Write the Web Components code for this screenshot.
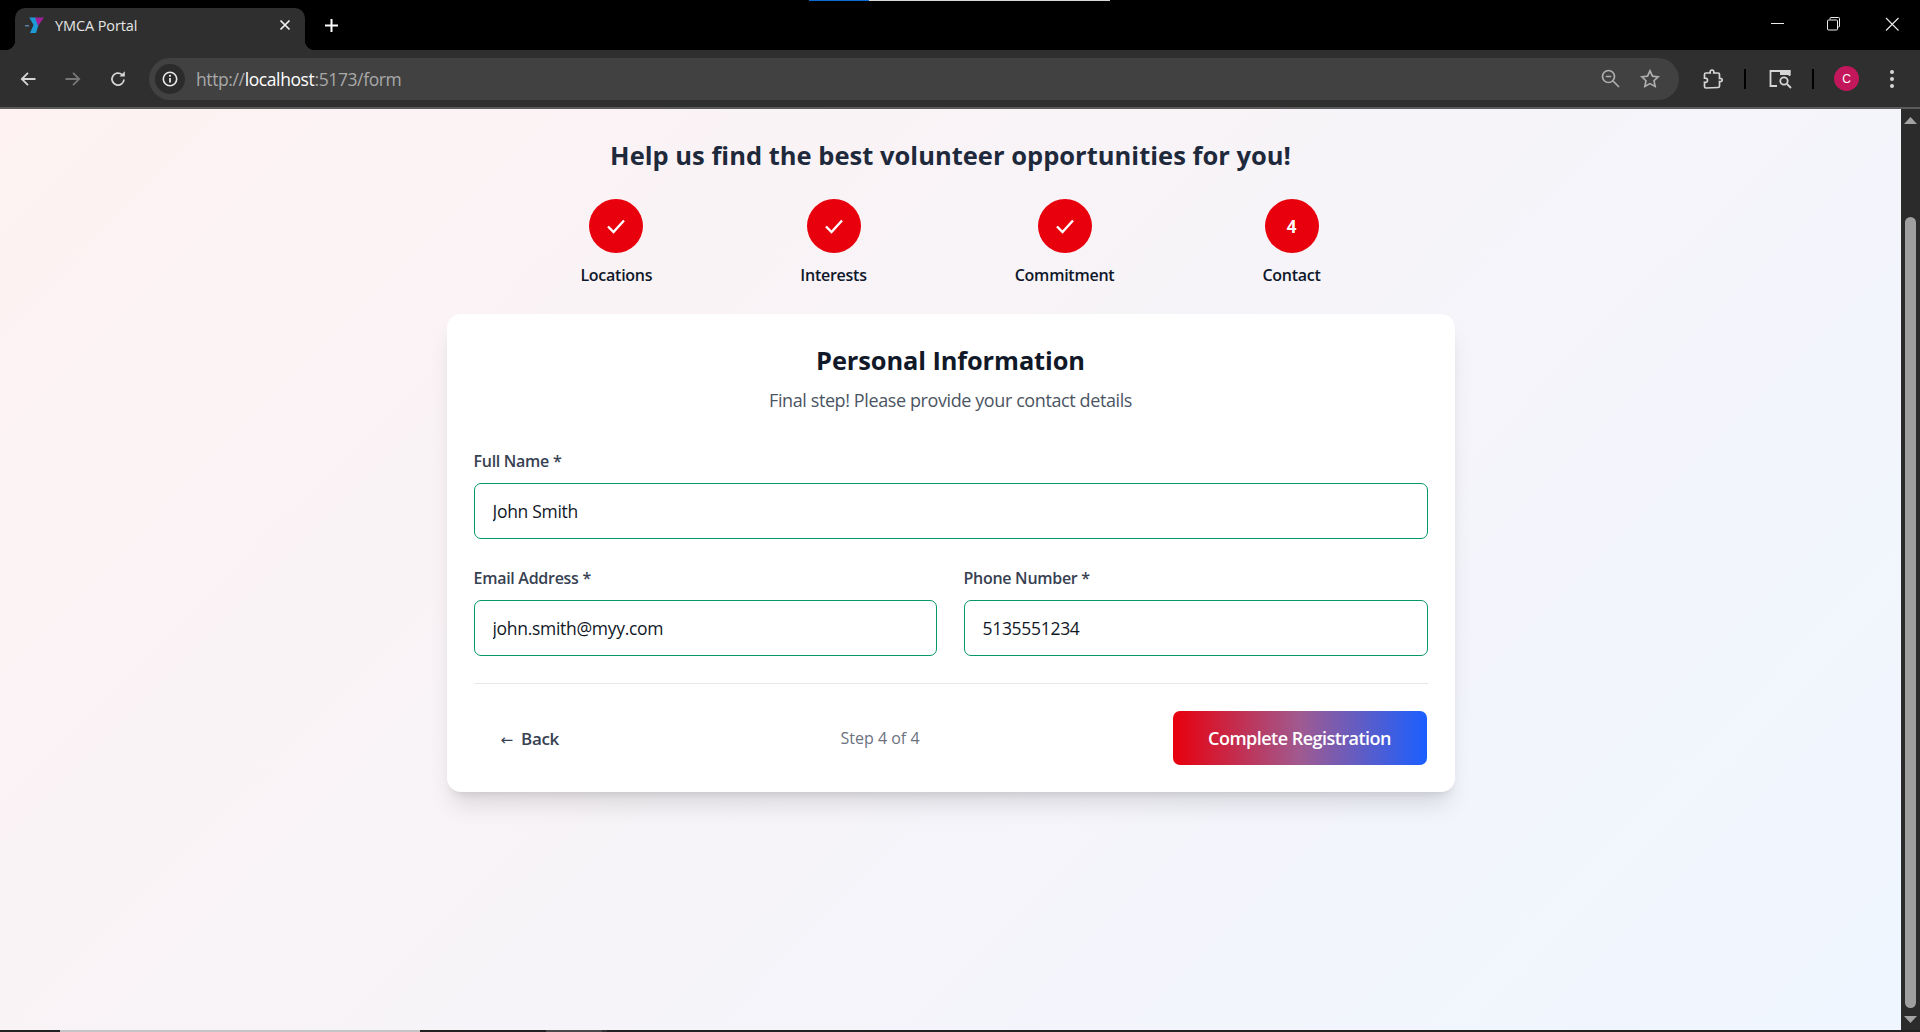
<!DOCTYPE html>
<html lang="en">
<head>
<meta charset="utf-8">
<title>YMCA Portal</title>
<style>
  html, body { margin: 0; height: 100%; overflow: hidden; background: #000; }
  body { font-family: "Open Sans", "Noto Sans", sans-serif; }
</style>
</head>
<body>
<browser-window>
  <form-page>
    <step-bar></step-bar>
    <info-card></info-card>
  </form-page>
</browser-window>

<script>
// Browser frame: tab strip, toolbar, scrollbar, and the page in a slot
class BrowserWindow extends HTMLElement {
  constructor() {
    super();
    this.attachShadow({ mode: 'open' });
    this.shadowRoot.innerHTML = `
      <style>
        :host { display: flex; flex-direction: column; height: 1032px; width: 1920px; position: relative; color: #fff; }
        .loading { position: absolute; left: 809px; top: 0; width: 301px; height: 1px; background: #d8d8d8; }
        .loading i { display: block; width: 60px; height: 1px; background: #0a6cd0; }
        .strip { height: 50px; flex: none; background: #000; display: flex; align-items: flex-end; padding-left: 15px; }
        .tab { width: 290px; height: 42px; background: #2f2f2f; border-radius: 10px 10px 0 0; position: relative; display: flex; align-items: center; padding: 0 0 8px 10px; box-sizing: border-box; font: 14.5px "Open Sans", sans-serif; letter-spacing: -.1px; color: #e6e6e6; }
        .tab::before, .tab::after { content: ""; position: absolute; bottom: 0; width: 10px; height: 10px; }
        .tab::before { left: -10px; background: radial-gradient(circle at 0 0, #000 10px, #2f2f2f 10.5px); }
        .tab::after { right: -10px; background: radial-gradient(circle at 100% 0, #000 10px, #2f2f2f 10.5px); }
        .tab span { margin-left: 8px; flex: 1; }
        .tab svg.x { margin-right: 14px; }
        .plus { margin: 0 0 18px 20px; align-self: flex-end; }
        .winbtns { margin-left: auto; display: flex; align-self: flex-start; margin-top: 16px; padding-right: 4px; }
        .winbtns svg { display: block; }
        .toolbar { height: 57px; flex: none; background: #2f2f2f; display: flex; align-items: center; box-sizing: border-box; padding-left: 20px; }
        .rule { height: 2px; flex: none; background: #5c5c5c; }
        .tb { display: block; flex: none; }
        .sep { width: 2px; height: 20px; margin-left: 20px; background: #000; flex: none; }
        .avatar { margin-left: 20px; width: 25px; height: 25px; border-radius: 50%; background: #c2185b; display: flex; align-items: center; justify-content: center; font: 12px "Liberation Sans", sans-serif; color: #fff; flex: none; }
        .omni { width: 1530px; height: 42px; margin-left: 23px; background: #414141; border-radius: 21px; display: flex; align-items: center; flex: none; box-sizing: border-box; }
        .info { width: 30px; height: 30px; margin-left: 6px; border-radius: 50%; background: #2b2b2b; display: flex; align-items: center; justify-content: center; }
        .url { margin-left: 11px; font: 17.5px "Open Sans", sans-serif; letter-spacing: -.39px; color: #a9a9a9; flex: 1; }
        .url b { font-weight: 400; color: #fff; }
        .body { flex: 1; display: flex; min-height: 0; }
        .content { flex: 1; min-width: 0; }
        .scroll { width: 19px; flex: none; background: #2b2b2b; position: relative; }
        .scroll .up { position: absolute; left: 3px; top: 8px; }
        .scroll .down { position: absolute; left: 3px; top: 907px; }
        .thumb { position: absolute; left: 4px; top: 108px; width: 11px; height: 791px; background: #9f9f9f; border-radius: 6px; }
        .taskbar { height: 2px; flex: none; display: flex; background: #222; }
        .taskbar i { display: block; height: 2px; flex: none; }
      </style>
      <div class="loading"><i></i></div>
      <div class="strip">
        <div class="tab">
          <svg class="fav" width="22" height="20" viewBox="0 0 22 20">
            <path d="M0 10h4v1.5H0z" fill="#5b7fa5"/>
            <path d="M4.300 2.500H11L13.500 10 11 18H5L8.500 10z" fill="#1d9ad6"/>
            <path d="M10 2.500h9L13 11z" fill="#a0209a"/>
          </svg>
          <span>YMCA Portal</span>
          <svg class="x" width="12" height="12" viewBox="0 0 12 12"><path d="M1.500 1.500l9 9M10.500 1.500l-9 9" stroke="#f2f2f2" stroke-width="1.700"/></svg>
        </div>
        <svg class="plus" width="13" height="13" viewBox="0 0 13 13"><path d="M6.500 0v13M0 6.500h13" stroke="#fff" stroke-width="2"/></svg>
        <div class="winbtns">
          <svg width="56" height="16" viewBox="0 0 56 16"><path d="M0 7.500h13" stroke="#ececec" stroke-width="1"/></svg>
          <svg width="58" height="16" viewBox="0 0 58 16" fill="none" stroke="#ececec"><rect x=".5" y="4" width="10" height="10" rx="1"/><path d="M3 3.500V2.500a1 1 0 0 1 1-1h7.500a1 1 0 0 1 1 1V10a1 1 0 0 1-1 1h-1"/></svg>
          <svg width="31" height="16" viewBox="0 0 31 16"><path d="M1 2l12.500 12.500M13.500 2L1 14.500" stroke="#ececec" stroke-width="1.100" fill="none"/></svg>
        </div>
      </div>
      <div class="toolbar">
        <svg class="tb" width="16" height="16" viewBox="0 0 16 16"><path d="M15.500 8H2M8 1.800L1.800 8 8 14.200" fill="none" stroke="#d6d6d6" stroke-width="1.800"/></svg>
        <svg class="tb" style="margin-left:29px" width="16" height="16" viewBox="0 0 16 16"><path d="M.5 8H14M8 1.800L14.200 8 8 14.200" fill="none" stroke="#777" stroke-width="1.800"/></svg>
        <svg class="tb" style="margin-left:29px" width="16" height="16" viewBox="0 0 16 16"><path d="M14 8.500A6 6 0 1 1 12 3.600" fill="none" stroke="#d6d6d6" stroke-width="1.800"/><path d="M9.500 5.500h5.300V.3z" fill="#d6d6d6"/></svg>
        <div class="omni">
          <div class="info">
            <svg width="16" height="16" viewBox="0 0 16 16"><circle cx="8" cy="8" r="6.700" fill="none" stroke="#e8e8e8" stroke-width="1.600"/><path d="M8 7v4.500" stroke="#e8e8e8" stroke-width="1.800"/><circle cx="8" cy="4.800" r="1.100" fill="#e8e8e8"/></svg>
          </div>
          <div class="url">http://<b>localhost</b>:5173/form</div>
          <svg class="tb" width="19" height="19" viewBox="0 0 19 19" fill="none" stroke="#aeaeae" stroke-width="1.700"><circle cx="7.500" cy="7.500" r="6"/><path d="M4.800 7.500h5.400M12 12l6 6"/></svg>
          <svg class="tb" style="margin:0 19px 0 20px" width="20" height="19" viewBox="0 0 20 19"><path d="M10 1.800l2.500 5.300 5.700.7-4.200 3.900 1.100 5.700-5.100-2.800-5.100 2.800 1.100-5.700L1.800 7.800l5.700-.7z" fill="none" stroke="#aeaeae" stroke-width="1.700"/></svg>
        </div>
        <svg class="tb" style="margin-left:23px" width="22" height="20" viewBox="0 0 22 20"><path d="M4 19a1.500 1.500 0 0 1-1.500-1.500v-4.200c2.500.5 3-1 3-2s-.7-2.600-3-2.200V5.500A1.500 1.500 0 0 1 4 4h4.200c-.4-1.700.4-3 1.800-3s2.200 1.300 1.800 3h4.200a1.500 1.500 0 0 1 1.500 1.500v4c1.800-.3 2.700.4 2.700 1.500s-.9 1.800-2.700 1.500v4.500a1.500 1.500 0 0 1-1.500 1.500z" fill="none" stroke="#d6d6d6" stroke-width="1.700"/></svg>
        <div class="sep"></div>
        <svg class="tb" style="margin-left:23px" width="23" height="20" viewBox="0 0 23 20" fill="none"><path d="M8 17H1.500V2h19v5" stroke="#d6d6d6" stroke-width="1.800"/><rect x="11" y="1" width="10.500" height="5" fill="#d6d6d6"/><circle cx="15" cy="12" r="3.700" stroke="#d6d6d6" stroke-width="1.800"/><path d="M18 15l4 4" stroke="#d6d6d6" stroke-width="1.800"/></svg>
        <div class="sep"></div>
        <div class="avatar">C</div>
        <svg class="tb" style="margin-left:30px" width="6" height="20" viewBox="0 0 6 20" fill="#d6d6d6"><circle cx="3" cy="3" r="2"/><circle cx="3" cy="10" r="2"/><circle cx="3" cy="17" r="2"/></svg>
      </div>
      <div class="rule"></div>
      <div class="body">
        <div class="content"><slot></slot></div>
        <div class="scroll">
          <svg class="up" width="13" height="7" viewBox="0 0 13 7"><path d="M6.500 0L13 7H0z" fill="#a3a3a3"/></svg>
          <div class="thumb"></div>
          <svg class="down" width="13" height="7" viewBox="0 0 13 7"><path d="M0 0h13L6.500 7z" fill="#a3a3a3"/></svg>
        </div>
      </div>
      <div class="taskbar">
        <i style="width:60px"></i>
        <i style="width:360px;background:#c4c4c4"></i>
        <i style="width:126px"></i>
        <i style="width:56px;background:#4a4a4a"></i>
        <i style="width:5px;background:#333"></i>
      </div>
    `;
  }
}
customElements.define('browser-window', BrowserWindow);

// The gradient page with heading and slotted content
class FormPage extends HTMLElement {
  constructor() {
    super();
    this.attachShadow({ mode: 'open' });
    this.shadowRoot.innerHTML = `
      <style>
        :host { display: flex; flex-direction: column; align-items: center; height: 921px; box-sizing: border-box; background: linear-gradient(135deg, #fef2f2, #eff6ff); padding-top: 28px; color: #1e293b; }
        h1 { margin: 0; font-size: 25.5px; line-height: 36px; font-weight: 700; color: #1e293b; letter-spacing: .02px; }
      </style>
      <h1>Help us find the best volunteer opportunities for you!</h1>
      <slot></slot>
    `;
  }
}
customElements.define('form-page', FormPage);

// One step of the progress indicator
class StepItem extends HTMLElement {
  constructor() {
    super();
    this.attachShadow({ mode: 'open' });
    this.shadowRoot.innerHTML = `
      <style>
        :host { display: flex; flex-direction: column; align-items: center; gap: 12px; }
        .dot { width: 54px; height: 54px; border-radius: 50%; background: #e8000d; color: #fff; display: flex; align-items: center; justify-content: center; font-size: 17px; font-weight: 700; }
        .label { font-size: 16px; line-height: 21px; font-weight: 550; color: #0f172a; letter-spacing: -.25px; white-space: nowrap; }
      </style>
      <div class="dot"><slot name="mark"></slot></div>
      <div class="label"><slot></slot></div>
    `;
  }
}
customElements.define('step-item', StepItem);

class StepBar extends HTMLElement {
  constructor() {
    super();
    this.attachShadow({ mode: 'open' });
    const check = `<svg slot="mark" width="20" height="16" viewBox="0 0 20 16"><path d="M2 8.500l5.500 5.500L18 2.500" fill="none" stroke="#fff" stroke-width="2.400"/></svg>`;
    this.shadowRoot.innerHTML = `
      <style>
        :host { display: flex; justify-content: center; gap: 148px; margin-top: 26px; }
      </style>
      <step-item>${check}Locations</step-item>
      <step-item>${check}Interests</step-item>
      <step-item>${check}Commitment</step-item>
      <step-item><span slot="mark">4</span>Contact</step-item>
    `;
  }
}
customElements.define('step-bar', StepBar);

// A label with a validated text input under it
class FormField extends HTMLElement {
  constructor() {
    super();
    this.attachShadow({ mode: 'open' });
    this.shadowRoot.innerHTML = `
      <style>
        :host { display: block; min-width: 0; }
        label { display: block; font-size: 16px; line-height: 21px; font-weight: 550; color: #374151; letter-spacing: -.28px; margin-bottom: 11px; }
        input { display: block; width: 100%; height: 56px; box-sizing: border-box; border: 1px solid #059669; border-radius: 7px; padding: 0 18px; font: 400 17.5px "Open Sans", sans-serif; letter-spacing: -.3px; color: #111827; background: #fff; outline: none; }
      </style>
      <label></label>
      <input type="text">
    `;
  }
  connectedCallback() {
    this.shadowRoot.querySelector('label').textContent = this.getAttribute('label');
    this.shadowRoot.querySelector('input').setAttribute('value', this.getAttribute('value'));
  }
}
customElements.define('form-field', FormField);

// The white card with the contact form
class InfoCard extends HTMLElement {
  constructor() {
    super();
    this.attachShadow({ mode: 'open' });
    this.shadowRoot.innerHTML = `
      <style>
        :host { display: block; width: 1008px; box-sizing: border-box; margin-top: 28px; padding: 27px; background: #fff; border-radius: 14px; box-shadow: 0 18px 23px -5px rgba(0,0,0,.11), 0 7px 9px -5px rgba(0,0,0,.1); }
        h2 { margin: 0; text-align: center; font-size: 25.4px; line-height: 38px; font-weight: 700; color: #111827; letter-spacing: -.1px; }
        p { margin: 8px 0 0; text-align: center; font-size: 18px; line-height: 26px; color: #4b5563; letter-spacing: -.4px; }
        .fields { margin-top: 38px; display: grid; grid-template-columns: 463px 464px; column-gap: 27px; row-gap: 29px; }
        .wide { grid-column: 1 / 3; }
        .foot { margin-top: 27px; border-top: 1px solid #e5e7eb; padding-top: 27px; display: flex; align-items: center; }
        .back { width: 367px; padding-left: 27px; box-sizing: border-box; font-size: 17px; font-weight: 600; color: #374151; letter-spacing: -.35px; }
        .back i { font: 400 15px "DejaVu Sans", sans-serif; letter-spacing: 0; margin-right: 8px; }
        .count { font-size: 16px; color: #6b7280; letter-spacing: 0; }
        button { margin-left: auto; width: 254px; height: 54px; margin-right: 1px; border: 0; border-radius: 7px; background: linear-gradient(90deg, #e8000d, #a05a90 50%, #1a5fff); color: #fff; font: 600 18px "Open Sans", sans-serif; letter-spacing: -.52px; }
      </style>
      <h2>Personal Information</h2>
      <p>Final step! Please provide your contact details</p>
      <div class="fields">
        <form-field class="wide" label="Full Name *" value="John Smith"></form-field>
        <form-field label="Email Address *" value="john.smith@myy.com"></form-field>
        <form-field label="Phone Number *" value="5135551234"></form-field>
      </div>
      <div class="foot">
        <span class="back"><i>←</i>Back</span>
        <span class="count">Step 4 of 4</span>
        <button type="button">Complete Registration</button>
      </div>
    `;
  }
}
customElements.define('info-card', InfoCard);
</script>
</body>
</html>
